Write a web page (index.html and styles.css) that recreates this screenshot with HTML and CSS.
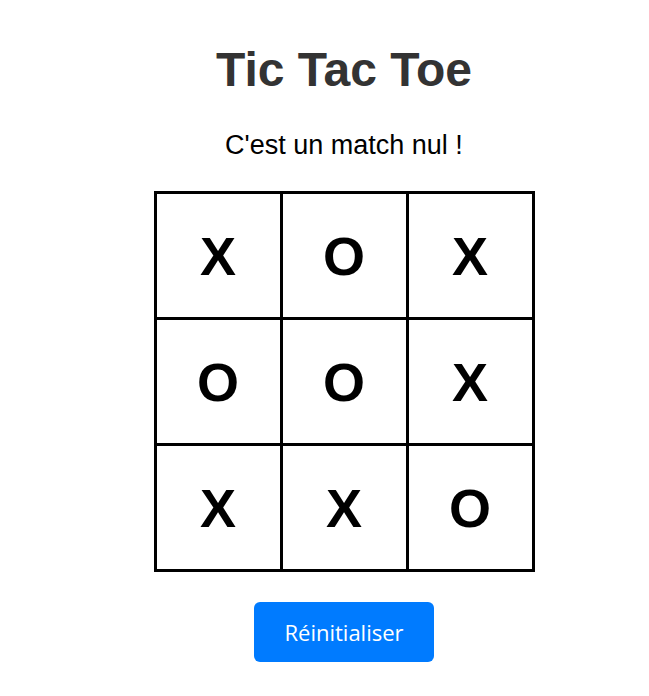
FILE: index.html
```html
<!DOCTYPE html>
<html lang="fr">
<head>
<meta charset="utf-8">
<title>Tic Tac Toe</title>
<link rel="stylesheet" href="styles.css">
</head>
<body>
<main class="game">
  <h1 class="title">Tic Tac Toe</h1>
  <p class="status">C'est un match nul !</p>
  <div class="board">
    <div class="cell">X</div>
    <div class="cell">O</div>
    <div class="cell">X</div>
    <div class="cell">O</div>
    <div class="cell">O</div>
    <div class="cell">X</div>
    <div class="cell">X</div>
    <div class="cell">X</div>
    <div class="cell">O</div>
  </div>
  <button class="reset" type="button">Réinitialiser</button>
</main>
</body>
</html>
```

FILE: styles.css
```css
html, body {
  margin: 0;
  padding: 0;
  background: #fff;
}

body {
  font-family: "Liberation Sans", Arial, sans-serif;
}

.game {
  display: flex;
  flex-direction: column;
  align-items: center;
  padding: 42px 0 0 39px;
}

.title {
  margin: 0;
  font-size: 48px;
  font-weight: bold;
  line-height: normal;
  color: #333;
}

.status {
  margin: 33px 0 30px;
  font-size: 27px;
  line-height: normal;
  color: #000;
}

.board {
  display: grid;
  grid-template-columns: repeat(3, 123px);
  grid-template-rows: repeat(3, 123px);
  gap: 3px;
  padding: 3px;
  background: #000;
}

.cell {
  display: flex;
  align-items: center;
  justify-content: center;
  background: #fff;
  font-size: 54px;
  font-weight: bold;
  color: #000;
}

.reset {
  margin-top: 30px;
  padding: 16px 30px;
  border: none;
  border-radius: 6px;
  background: #007bff;
  color: #fff;
  font-family: "Open Sans", "Noto Sans", sans-serif;
  font-size: 22px;
  line-height: 28px;
  cursor: pointer;
}
```
